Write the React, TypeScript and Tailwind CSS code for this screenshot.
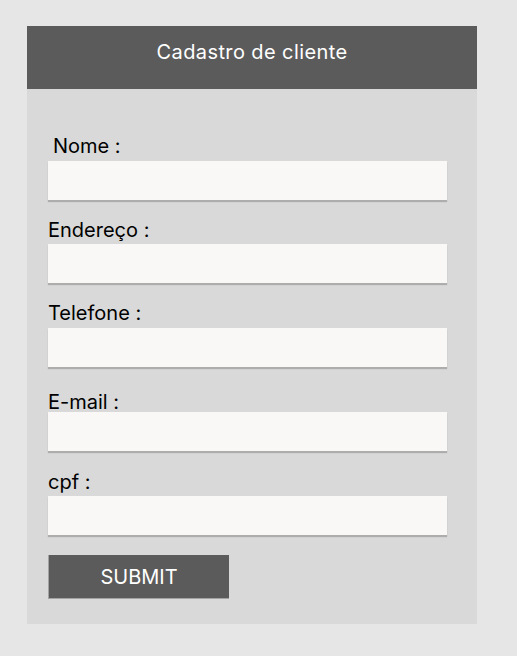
import React from "react";

const fields = [
    { label: "Nome :", labelClass: "pl-[5px] mt-0 mb-[3px]" },
    { label: "Endereço :", labelClass: "mt-[18px] mb-[2px]" },
    { label: "Telefone :", labelClass: "mt-[18px] mb-[3px]" },
    { label: "E-mail :", labelClass: "mt-[23px] mb-[-2px]" },
    { label: "cpf :", labelClass: "mt-[19px] mb-[2px]" },
];

export default function App() {
    return (
        <div
            className="min-h-[656px] w-full bg-[#e6e6e6] pt-[26px] pl-[27px]"
            style={{ fontFamily: "Inter, 'Noto Sans', sans-serif" }}
        >
            <div className="w-[450px] bg-[#d9d9d9]">
                <div className="h-[63px] bg-[#5b5b5b] flex justify-center pt-[14px]">
                    <h1 className="text-white text-[20px] leading-[24px] font-normal tracking-[0.02em]">Cadastro de cliente</h1>
                </div>

                <form className="flex flex-col px-[21px] pt-[45px] pb-[25px]" onSubmit={(e) => e.preventDefault()}>
                    {fields.map((f) => (
                        <div key={f.label} className="flex flex-col">
                            <label className={`text-[20px] leading-[24px] text-black ${f.labelClass}`}>{f.label}</label>
                            <input
                                type="text"
                                className="h-[39px] w-[399px] bg-[#f9f8f7] shadow-[0_2px_1px_rgba(0,0,0,0.2)] outline-none px-2"
                            />
                        </div>
                    ))}

                    <button
                        type="submit"
                        className="mt-[20px] h-[44px] w-[181px] bg-[#5b5b5b] text-white text-[20px] leading-[24px] border-l border-b border-[#a3a3a3]"
                    >
                        SUBMIT
                    </button>
                </form>
            </div>
        </div>
    );
}
